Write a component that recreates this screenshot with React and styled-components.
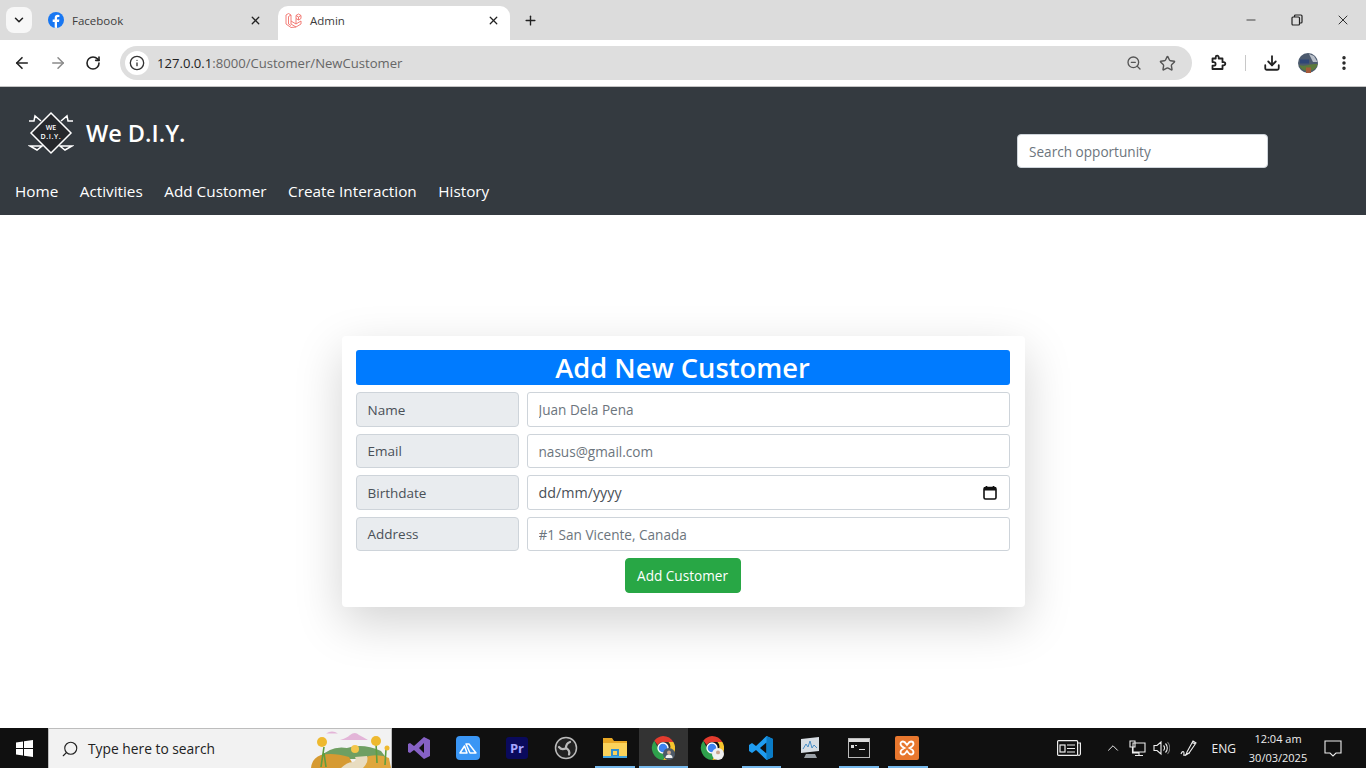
import React from 'react';
import styled, { createGlobalStyle } from 'styled-components';
import {
  ArrowLeft, ArrowRight, RotateCw, Info, ZoomOut, Star, Download, EllipsisVertical,
  Minus, X, Plus, ChevronDown, ChevronUp, Search,
} from 'lucide-react';

const Global = createGlobalStyle`
  html, body { margin: 0; padding: 0; height: 100%; overflow: hidden; }
  * { box-sizing: border-box; }
  body { font-family: 'Open Sans', 'Noto Sans', sans-serif; background: #fff; }
`;

const Page = styled.div`
  display: flex;
  flex-direction: column;
  height: 768px;
`;

/* browser chrome */
const TabStrip = styled.div`
  height: 40px;
  background: #dcdcdc;
  display: flex;
  align-items: flex-end;
  padding-left: 6px;
  color: #222;
`;
const TabMenu = styled.div`
  width: 26px;
  height: 26px;
  margin-bottom: 7px;
  background: #f7f7f7;
  border-radius: 8px;
  display: flex;
  align-items: center;
  justify-content: center;
`;
const Tab = styled.div`
  width: ${p => p.$w}px;
  height: 34px;
  padding: 0 ${p => p.$pr}px 6px ${p => p.$pl}px;
  display: flex;
  align-items: center;
  gap: 8px;
  font-size: 11.5px;
  color: #3c3c3c;
  background: ${p => (p.$active ? '#fff' : 'transparent')};
  border-radius: 10px 10px 0 0;
`;
const TabTitle = styled.span`
  flex: 1;
`;
const NewTab = styled.div`
  margin: 0 0 12px 13px;
  display: flex;
`;
const WindowControls = styled.div`
  margin-left: auto;
  margin-bottom: 12px;
  width: 122px;
  display: flex;
  justify-content: space-between;
  padding-right: 15px;
  align-items: center;
`;
const Toolbar = styled.div`
  height: 46px;
  background: #fff;
  border-radius: 10px 10px 0 0;
  display: flex;
  align-items: center;
  padding-left: 13px;
  gap: 18px;
  color: #222;
`;
const Address = styled.div`
  width: 1072px;
  height: 34px;
  margin-left: 1px;
  background: #dedede;
  border-radius: 17px;
  display: flex;
  align-items: center;
  padding: 0 16px 0 5px;
  font-size: 13.1px;
  color: #666;
`;
const InfoBadge = styled.div`
  width: 24px;
  height: 24px;
  border-radius: 50%;
  background: #fff;
  display: flex;
  align-items: center;
  justify-content: center;
  margin-right: 8px;
  color: #333;
`;
const Host = styled.span`
  color: #222;
`;
const AddressTools = styled.div`
  margin-left: auto;
  display: flex;
  gap: 17px;
  color: #555;
`;
const ToolGroup = styled.div`
  display: flex;
  align-items: center;
  color: #222;
`;
const Divider = styled.div`
  width: 1px;
  height: 16px;
  background: #c8c8c8;
  margin: 0 17px;
`;
const Rule = styled.div`
  height: 1px;
  background: #c4c4c4;
`;

/* site navbar */
const Navbar = styled.nav`
  height: 128px;
  background: #343a40;
  display: flex;
  justify-content: space-between;
  padding: 0 98px 0 15px;
`;
const NavLeft = styled.div`
  display: flex;
  flex-direction: column;
`;
const Brand = styled.div`
  display: flex;
  align-items: flex-start;
  gap: 12px;
  padding: 23px 0 0 13px;
  height: 92px;
  color: #fff;
  font-size: 23.5px;
  font-weight: 600;
`;
const BrandName = styled.span`
  line-height: 46px;
`;
const NavLinks = styled.div`
  display: flex;
  gap: 21.5px;
  font-size: 15.3px;
  color: #fff;
  line-height: 24px;
`;
const SearchBox = styled.input`
  width: 251px;
  height: 34px;
  margin-top: 47px;
  background: #fff;
  border: 1px solid #ced4da;
  border-radius: 4px;
  padding: 0 11px;
  font: 13.6px 'Open Sans', sans-serif;
  &::placeholder { color: #6c757d; opacity: 1; }
`;

/* form */
const Main = styled.main`
  flex: 1;
  display: flex;
  align-items: center;
  justify-content: center;
`;
const Card = styled.form`
  width: 683px;
  height: 271px;
  padding: 14px 15px 14px 14px;
  background: #fff;
  border-radius: 4px;
  box-shadow: 0 16px 48px rgba(0, 0, 0, 0.175);
  display: flex;
  flex-direction: column;
`;
const Heading = styled.h2`
  margin: 0 0 7px;
  height: 35px;
  line-height: 36px;
  background: #007bff;
  border-radius: 3px;
  color: #fff;
  text-align: center;
  font-size: 27.3px;
  font-weight: 600;
`;
const Row = styled.div`
  display: grid;
  grid-template-columns: 163px 1fr;
  gap: 8px;
  height: ${p => p.$h}px;
  margin-bottom: 7px;
`;
const Label = styled.label`
  background: #e9ecef;
  border: 1px solid #ced4da;
  border-radius: 4px;
  padding: 0 11px;
  display: flex;
  align-items: center;
  font-size: 13.5px;
  color: #495057;
`;
const Field = styled.input`
  width: 100%;
  height: 100%;
  border: 1px solid #ced4da;
  border-radius: 3px;
  padding: ${p => (p.$low ? 1 : 0)}px 11px 0;
  font: 13.6px 'Open Sans', sans-serif;
  color: #495057;
  &::placeholder { color: #6c757d; opacity: 1; }
`;
const DateField = styled.div`
  border: 1px solid #ced4da;
  border-radius: 3px;
  padding: 0 12px 0 11px;
  display: flex;
  align-items: center;
  justify-content: space-between;
  font-size: 14.3px;
  color: #495057;
`;
const Submit = styled.button`
  align-self: center;
  width: 116px;
  height: 35px;
  background: #28a745;
  border: 1px solid #28a745;
  border-radius: 4px;
  color: #fff;
  padding: 0;
  font: 13.6px 'Open Sans', sans-serif;
`;

/* windows taskbar */
const Taskbar = styled.div`
  height: 40px;
  background: #101010;
  display: flex;
  color: #fff;
`;
const StartButton = styled.div`
  width: 48px;
  display: flex;
  align-items: center;
  justify-content: center;
`;
const TaskSearch = styled.div`
  width: 344px;
  background: #f2f2f2;
  border: 1px solid #bdbdbd;
  border-width: 1px 1px 0 1px;
  color: #222;
  display: flex;
  align-items: center;
  padding-left: 12px;
  gap: 9px;
  font-size: 13.8px;
  position: relative;
  overflow: hidden;
`;
const SearchArt = styled.svg`
  position: absolute;
  right: 0;
  top: 0;
`;
const Apps = styled.div`
  display: flex;
  margin-left: 3px;
`;
const AppCell = styled.div`
  width: 48.8px;
  height: 40px;
  display: flex;
  align-items: center;
  justify-content: center;
  position: relative;
  background: ${p => (p.$active ? '#333' : 'transparent')};
  &::after {
    content: '';
    display: ${p => (p.$open ? 'block' : 'none')};
    position: absolute;
    bottom: 0;
    left: ${p => (p.$active ? 0 : 5)}px;
    right: ${p => (p.$active ? 0 : 4)}px;
    height: 2px;
    background: #76b9ed;
  }
`;
const Tray = styled.div`
  margin-left: auto;
  display: flex;
  align-items: center;
  color: #eee;
  font-size: 12px;
  padding-right: 24px;
`;
const TrayIcon = styled.div`
  display: flex;
  margin-left: ${p => p.$ml}px;
`;
const Clock = styled.div`
  width: 68px;
  margin-left: 8px;
  text-align: center;
  line-height: 19px;
  font-size: 11px;
`;

const FacebookIcon = () => (
  <svg width="16" height="16" viewBox="0 0 16 16">
    <circle cx="8" cy="8" r="8" fill="#1877f2" />
    <path d="M9 16V10h2l.4-2.4H9V6.2c0-.8.3-1.2 1.2-1.2h1.2V3a9 9 0 0 0-1.7-.2C7.900 2.800 6.700 3.900 6.700 5.900v1.700H4.700V10h2v5.800z" fill="#fff" />
  </svg>
);

const LaravelIcon = () => (
  <svg width="17" height="17" viewBox="0 0 17 17" fill="none" stroke="#f0706a" strokeWidth=".9" strokeLinejoin="round">
    <path d="M1 3l2.500-1.500L6 3v9l5 3 5-3V9l-5 3-5-3" />
    <path d="M1 3v9l5 3.500 5-.5M3.500 4.500L6 3M3.500 4.500v7.500l2.500 1.500" />
    <path d="M11 3.500L13.500 2 16 3.500v3L13.500 8 11 6.500zM11 3.500l2.500 1.500L16 3.500M13.500 5v3M11 6.500V12" />
  </svg>
);

const RestoreIcon = () => (
  <svg width="12" height="12" viewBox="0 0 12 12" fill="none" stroke="#222" strokeWidth="1.200">
    <rect x="1" y="3" width="7.500" height="8" rx="1" />
    <path d="M3.500 3V2a1 1 0 0 1 1-1H10a1 1 0 0 1 1 1v6a1 1 0 0 1-1 1H8.500" />
  </svg>
);

const PuzzleIcon = () => (
  <svg width="18" height="18" viewBox="0 0 18 18" fill="none" stroke="#222" strokeWidth="1.800" strokeLinejoin="round">
    <path d="M2.500 4.500h3.200V3.200a1.500 1.500 0 0 1 3 0v1.300h3.800v3.700h1.200a1.600 1.600 0 0 1 0 3.200h-1.200v3.600H2.500v-3.300h1.300a1.800 1.800 0 0 0 0-3.600H2.500z" />
  </svg>
);

const Avatar = () => (
  <svg width="20" height="20" viewBox="0 0 20 20">
    <circle cx="10" cy="10" r="10" fill="#4c5a6e" />
    <path d="M1 12c3 1 6 1 9 0s6-1 9.800-1A10 10 0 0 1 1 12z" fill="#5c7a3c" />
    <path d="M2 6.500h9v4H2z" fill="#2f4778" />
    <path d="M11 1l5 2 3.500 6H15z" fill="#b8bec8" />
    <path d="M8 14.500h5V20H8z" fill="#a55a3a" />
  </svg>
);

const BrandLogo = () => (
  <svg width="46" height="46" viewBox="0 0 46 46" fill="none" stroke="#fff" strokeWidth="1.500">
    <path d="M23 3l20 20-20 20L3 23z" fill="#26282c" />
    <path d="M1 11h5l1-5 6 5M45 11h-5l-1-5-6 5" />
    <path d="M2 36h12l-5 4zM44 36H32l5 4z" />
    <text x="23" y="20" textAnchor="middle" fill="#fff" stroke="none" fontSize="7" fontWeight="600" fontFamily="'Open Sans', sans-serif">WE</text>
    <text x="23" y="29" textAnchor="middle" fill="#fff" stroke="none" fontSize="7" letterSpacing=".6" fontFamily="'Open Sans', sans-serif">D.I.Y.</text>
  </svg>
);

const CalendarIcon = () => (
  <svg width="14" height="14" viewBox="0 0 14 14" fill="none">
    <path d="M3.500 0v2M10.500 0v2" stroke="#111" strokeWidth="1.600" />
    <rect x="1" y="1.500" width="12" height="11.500" rx="1.500" stroke="#111" strokeWidth="1.600" />
    <rect x="1" y="1.500" width="12" height="3" fill="#111" />
  </svg>
);

const WindowsIcon = () => (
  <svg width="17" height="17" viewBox="0 0 17 17" fill="#fff">
    <path d="M0 2.400L7 1.400v6.600H0zM8 1.300L17 0v8H8zM0 9h7v6.600l-7-1zM8 9h9v8l-9-1.300z" />
  </svg>
);

const ChromeIcon = ({ badge }) => (
  <svg width="24" height="24" viewBox="0 0 24 24">
    <path d="M12 0a12 12 0 0 1 10.400 6H12a6 6 0 0 0-5.200 3L3.300 4.800A12 12 0 0 1 12 0z" fill="#e33b2e" />
    <path d="M22.400 6a12 12 0 0 1-10.400 18l4.800-8.500a6 6 0 0 0 .6-9.500z" fill="#f7c42d" />
    <path d="M12 24A12 12 0 0 1 3.300 4.800L7 12a6 6 0 0 0 5.500 6 6 6 0 0 0 4.300-2.500z" fill="#2fa14c" />
    <circle cx="12" cy="12" r="5" fill="#3d82f0" stroke="#fff" strokeWidth="1.400" />
    <circle cx="18" cy="18" r="6" fill={badge} />
    <circle cx="18" cy="16.500" r="2" fill="#c9a48c" />
    <path d="M14.500 22a3.500 3.500 0 0 1 7 0z" fill="#f2f2f2" />
  </svg>
);

const appIcons = [
  <svg key="vs" width="24" height="24" viewBox="0 0 24 24"><path d="M17 1l6 3v16l-6 3L7 14l-4 3-2-1V8l2-1 4 3zM17 7l-5 5 5 5z" fill="#8661c5" /></svg>,
  <svg key="cc" width="24" height="24" viewBox="0 0 24 24"><rect width="24" height="24" rx="4" fill="#3a96f5" /><path d="M4 17l4.500-7 2.500 7zM10 8h3l7 9h-6z" fill="none" stroke="#fff" strokeWidth="1.500" strokeLinejoin="round" /></svg>,
  <svg key="pr" width="22" height="22" viewBox="0 0 22 22"><rect width="22" height="22" rx="3" fill="#0a0a5c" /><text x="11" y="16" textAnchor="middle" fontSize="13" fontWeight="700" fill="#a6a6ff" fontFamily="'Open Sans', sans-serif">Pr</text></svg>,
  <svg key="obs" width="24" height="24" viewBox="0 0 24 24" fill="none" stroke="#bbb"><circle cx="12" cy="12" r="10.500" fill="#222" strokeWidth="1.500" /><path d="M12 12c0-3 1-5 4-6M12 12c2.500 1.500 4 3.500 3 6.500M12 12c-2.500 1.500-5 1.500-7-1" strokeWidth="2.200" strokeLinecap="round" /></svg>,
  <svg key="ex" width="24" height="22" viewBox="0 0 24 22"><path d="M0 1h9l2 3h13v3H0z" fill="#e9a825" /><rect y="6" width="24" height="15" fill="#fbd35b" /><rect x="8" y="12" width="8" height="8" fill="#2f8fcf" /><rect x="10" y="14" width="4" height="4" fill="#fbd35b" /><rect y="19" width="24" height="2" fill="#42a5e0" /></svg>,
  <ChromeIcon key="c1" badge="#4d5a68" />,
  <ChromeIcon key="c2" badge="#efefef" />,
  <svg key="vsc" width="24" height="24" viewBox="0 0 24 24"><path d="M17.500 0L24 3v18l-6.500 3L7 14l-4 3-3-2V9l3-2 4 3z" fill="#1f9cf0" /><path d="M17.500 6.500L11 12l6.500 5.500z" fill="#101010" /><path d="M17.500 0L24 3v18l-6.500 3z" fill="#0a7cc7" /></svg>,
  <svg key="pf" width="24" height="24" viewBox="0 0 24 24"><path d="M3 3l18-2v14L3 17z" fill="#d7dde3" /><path d="M5 13l3-5 2 3 2-6 2 7 2-3 3 3" fill="none" stroke="#4a8fc7" strokeWidth="1" /><path d="M8 18h9l2 4H6z" fill="#9aa0a6" /></svg>,
  <svg key="cmd" width="22" height="20" viewBox="0 0 22 20"><rect x=".5" y=".5" width="21" height="19" fill="#111" stroke="#bbb" /><rect x="1" y="1" width="20" height="3" fill="#ddd" /><path d="M3 7h3v3H3zM7 7h2v1H7zM11 11h6v1h-6z" fill="#ddd" /></svg>,
  <svg key="xa" width="24" height="24" viewBox="0 0 24 24"><rect width="24" height="24" rx="2" fill="#e8772e" /><path d="M8 5.500a2.500 2.500 0 0 0-2.500 2.500c0 2 2 3 4 4-2 1-4 2-4 4a2.500 2.500 0 0 0 2.500 2.500c2 0 3-2 4-3.500 1 1.500 2 3.500 4 3.500a2.500 2.500 0 0 0 2.500-2.500c0-2-2-3-4-4 2-1 4-2 4-4A2.500 2.500 0 0 0 16 5.500c-2 0-3 2-4 3.500-1-1.500-2-3.500-4-3.500z" fill="none" stroke="#fff" strokeWidth="1.800" /></svg>,
];
const openApps = [false, false, false, false, true, true, false, true, false, true, true];

const App = () => (
  <Page>
    <Global />
    <TabStrip>
      <TabMenu><ChevronDown size={14} strokeWidth={2.6} /></TabMenu>
      <Tab $w={246} $pl={16} $pr={16}>
        <FacebookIcon />
        <TabTitle>Facebook</TabTitle>
        <X size={13} strokeWidth={2.4} color="#222" />
      </Tab>
      <Tab $w={232} $pl={7} $pr={10} $active>
        <LaravelIcon />
        <TabTitle>Admin</TabTitle>
        <X size={13} strokeWidth={2.4} color="#222" />
      </Tab>
      <NewTab><Plus size={15} strokeWidth={2.2} /></NewTab>
      <WindowControls>
        <Minus size={14} strokeWidth={1.4} />
        <RestoreIcon />
        <X size={16} strokeWidth={1.4} />
      </WindowControls>
    </TabStrip>
    <Toolbar>
      <ArrowLeft size={18} strokeWidth={2.2} />
      <ArrowRight size={18} strokeWidth={2} color="#8a8a8a" />
      <RotateCw size={16} strokeWidth={2.4} />
      <Address>
        <InfoBadge><Info size={16} strokeWidth={2} /></InfoBadge>
        <span><Host>127.0.0.1</Host>:8000/Customer/NewCustomer</span>
        <AddressTools>
          <ZoomOut size={16} strokeWidth={2} />
          <Star size={17} strokeWidth={2} />
        </AddressTools>
      </Address>
      <ToolGroup>
        <PuzzleIcon />
        <Divider />
        <Download size={18} strokeWidth={2.4} />
        <TrayIcon $ml={17}><Avatar /></TrayIcon>
        <TrayIcon $ml={17}><EllipsisVertical size={18} strokeWidth={2.6} /></TrayIcon>
      </ToolGroup>
    </Toolbar>
    <Rule />
    <Navbar>
      <NavLeft>
        <Brand>
          <BrandLogo />
          <BrandName>We D.I.Y.</BrandName>
        </Brand>
        <NavLinks>
          <span>Home</span>
          <span>Activities</span>
          <span>Add Customer</span>
          <span>Create Interaction</span>
          <span>History</span>
        </NavLinks>
      </NavLeft>
      <SearchBox placeholder="Search opportunity" />
    </Navbar>
    <Main>
      <Card>
        <Heading>Add New Customer</Heading>
        <Row $h={35}><Label>Name</Label><Field placeholder="Juan Dela Pena" /></Row>
        <Row $h={34}><Label>Email</Label><Field $low placeholder="nasus@gmail.com" /></Row>
        <Row $h={35}><Label>Birthdate</Label><DateField>dd/mm/yyyy<CalendarIcon /></DateField></Row>
        <Row $h={34}><Label>Address</Label><Field $low placeholder="#1 San Vicente, Canada" /></Row>
        <Submit type="button">Add Customer</Submit>
      </Card>
    </Main>
    <Taskbar>
      <StartButton><WindowsIcon /></StartButton>
      <TaskSearch>
        <Search size={18} strokeWidth={1.5} style={{ transform: 'scaleX(-1)' }} />
        Type here to search
        <SearchArt width="80" height="39" viewBox="0 0 80 39">
          <path d="M15 4.500q6-4 12 0zM29 11q7-2 10-5 5-4 9 0 4 2 9 5z" fill="#e3b5d8" />
          <path d="M6 30q14-14 30-11 16-5 34 3l6 8z" fill="#6f9f62" />
          <circle cx="44" cy="20" r="4" fill="#f3c64a" />
          <path d="M0 39q1-10 10-13 12-3 28 2l6 11z" fill="#d69a32" />
          <path d="M46 39q2-9 12-12 12-2 20 2l2 10z" fill="#dfa63c" />
          <path d="M30 39q6-6 12-6 4-1 2-5l12-1q2 6-4 12z" fill="#e8dcc0" />
          <path d="M10 38l3-20M15 38l-2-14M66 34l-1-20M74 36l1-16" stroke="#5f9e3e" strokeWidth="1.600" fill="none" />
          <circle cx="11" cy="13" r="5" fill="#eeb92f" />
          <circle cx="65" cy="12" r="5" fill="#eeb92f" />
          <circle cx="76" cy="19" r="2.500" fill="#eeb92f" />
        </SearchArt>
      </TaskSearch>
      <Apps>
        {appIcons.map((icon, i) => (
          <AppCell key={i} $active={i === 5} $open={openApps[i]}>{icon}</AppCell>
        ))}
      </Apps>
      <Tray>
        <TrayIcon $ml={0}>
          <svg width="24" height="16" viewBox="0 0 24 16" fill="none" stroke="#eee" strokeWidth="1.200">
            <rect x=".6" y=".6" width="20" height="14.800" rx="1" />
            <rect x="3" y="5" width="5" height="7" />
            <path d="M10 5h8M10 8.500h8M10 12h8M21 3h2.400v11a1.500 1.500 0 0 1-2.400 1" />
          </svg>
        </TrayIcon>
        <TrayIcon $ml={23}><ChevronUp size={18} strokeWidth={1.3} /></TrayIcon>
        <TrayIcon $ml={7}>
          <svg width="17" height="17" viewBox="0 0 17 17" fill="none" stroke="#eee" strokeWidth="1.100">
            <path d="M4 3h12v9H4zM1 1h5v6H1zM10 12v3M6 15.500h8M3.500 7v6h6" />
          </svg>
        </TrayIcon>
        <TrayIcon $ml={7}>
          <svg width="17" height="16" viewBox="0 0 17 16" fill="none" stroke="#eee" strokeWidth="1.100">
            <path d="M1 5.500h3L8 2v12L4 10.500H1zM10.500 5.500a3.500 3.500 0 0 1 0 5M12.500 3.500a6.500 6.500 0 0 1 0 9" />
            <path d="M14.500 2a9 9 0 0 1 0 12" stroke="#777" />
          </svg>
        </TrayIcon>
        <TrayIcon $ml={10}>
          <svg width="18" height="18" viewBox="0 0 18 18" fill="none" stroke="#eee" strokeWidth="1.100">
            <path d="M7 13l6-11 3 2-7 10-3 2zM1 15c1-3 3-3 3-1s-1 3 1 2 3-2 5-2M12 3l3 2" />
          </svg>
        </TrayIcon>
        <TrayIcon $ml={14}>ENG</TrayIcon>
        <Clock>12:04 am<br />30/03/2025</Clock>
        <TrayIcon $ml={12}>
          <svg width="18" height="17" viewBox="0 0 18 17" fill="none" stroke="#eee" strokeWidth="1.100">
            <path d="M1 1h16v12h-5l-3 3-3-3H1z" />
          </svg>
        </TrayIcon>
      </Tray>
    </Taskbar>
  </Page>
);

export default App;
